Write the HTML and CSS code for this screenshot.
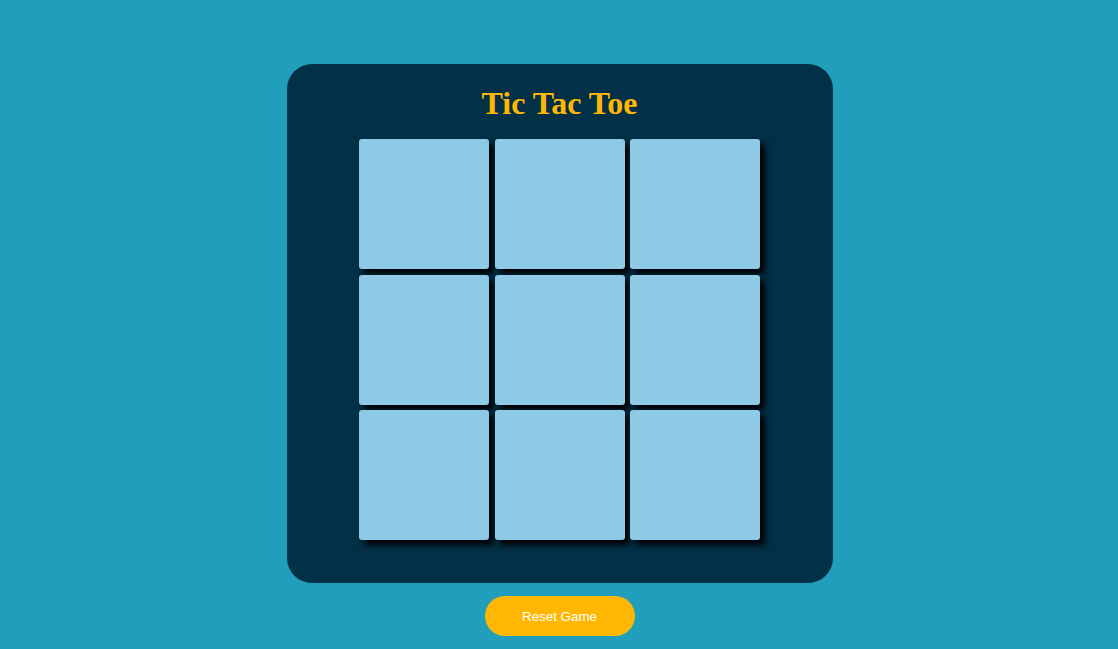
FILE: index.html
```html
<!DOCTYPE html>
<html>
<head>
<meta charset="utf-8">
<title>Tic Tac Toe</title>
<link rel="stylesheet" href="styles.css">
</head>
<body>
<main class="page">
  <section class="game">
    <h1 class="title">Tic Tac Toe</h1>
    <div class="board">
      <button class="cell"></button>
      <button class="cell"></button>
      <button class="cell"></button>
      <button class="cell"></button>
      <button class="cell"></button>
      <button class="cell"></button>
      <button class="cell"></button>
      <button class="cell"></button>
      <button class="cell"></button>
    </div>
  </section>
  <button class="reset">Reset Game</button>
</main>
</body>
</html>
```

FILE: styles.css
```css
html, body {
  margin: 0;
  padding: 0;
  background: #219ebc;
}
.page {
  display: flex;
  flex-direction: column;
  align-items: center;
  padding-top: 64px;
}
.game {
  box-sizing: border-box;
  width: 546px;
  height: 519px;
  margin-left: 1px;
  background: #023047;
  border-radius: 25px;
  padding-top: 21px;
  display: flex;
  flex-direction: column;
  align-items: center;
}
.title {
  margin: 0 0 17px 0;
  font-family: "Liberation Serif", "Times New Roman", serif;
  font-weight: bold;
  font-size: 32px;
  color: #ffb703;
}
.board {
  display: grid;
  grid-template-columns: repeat(3, 130px);
  grid-auto-rows: 130px;
  gap: 5.5px;
}
.cell {
  border: none;
  padding: 0;
  margin: 0;
  background: #8ecae6;
  border-radius: 3px;
  box-shadow: 5px 5px 6px #000;
}
.reset {
  margin-top: 13px;
  margin-left: 1px;
  width: 150px;
  height: 40px;
  border: none;
  border-radius: 20px;
  background: #ffb703;
  color: #fff;
  font-family: "Liberation Sans", Arial, sans-serif;
  font-size: 13.33px;
}
```
